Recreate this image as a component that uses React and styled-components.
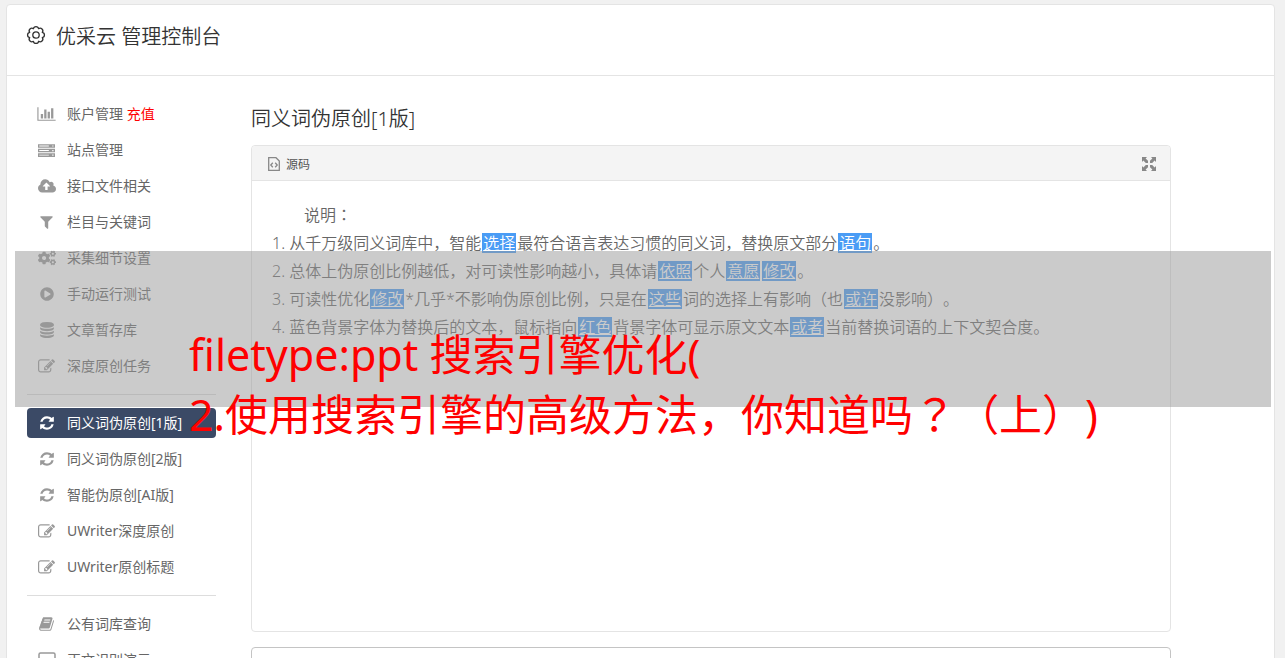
import React from 'react'
import styled, { createGlobalStyle, css } from 'styled-components'
import { FaCogs, FaPlayCircle } from 'react-icons/fa'

const ChartIcon = () => (
    <svg viewBox="0 0 2048 1792" width="19" height="16" fill="currentColor" aria-hidden="true">
        <path d="M640 896v512h-256v-512h256zm384-512v1024h-256v-1024h256zm1024 1152v128h-2048v-1536h128v1408h1920zm-640-896v768h-256v-768h256zm384-384v1152h-256v-1152h256z" />
    </svg>
)

const ServerIcon = () => (
    <svg viewBox="0 0 16 14" width="17" height="15" fill="currentColor" aria-hidden="true">
        <path fillRule="evenodd" d="M0 1h16v3.4H0zM1.2 2.3v.9h9v-.9zM13.4 2.2v1.1h1.2V2.2zM0 5.3h16v3.4H0zM1.2 6.6v.9h9v-.9zM13.4 6.5v1.1h1.2V6.5zM0 9.6h16V13H0zM1.2 10.9v.9h9v-.9zM13.4 10.8v1.1h1.2v-1.1z" />
    </svg>
)

const CloudIcon = () => (
    <svg viewBox="0 0 1920 1792" width="18" height="17" fill="currentColor" aria-hidden="true">
        <path d="M1280 864q0-14-9-23l-352-352q-9-9-23-9t-23 9l-351 351q-10 12-10 24 0 14 9 23t23 9h224v352q0 13 9.500 22.500t22.500 9.500h192q13 0 22.500-9.500t9.500-22.500v-352h224q13 0 22.500-9.500t9.500-22.500zm640 288q0 159-112.500 271.500t-271.500 112.500h-1088q-185 0-316.500-131.500t-131.500-316.500q0-130 70-240t188-165q-2-30-2-43 0-212 150-362t362-150q156 0 285.500 87t188.500 231q71-62 166-62 106 0 181 75t75 181q0 76-41 138 130 31 213.500 135.500t83.500 238.500z" />
    </svg>
)

const FilterIcon = () => (
    <svg viewBox="0 0 1408 1792" width="13" height="16" fill="currentColor" aria-hidden="true">
        <path d="M1403 295q17 41-14 70l-493 493v742q0 42-39 59-13 5-25 5-27 0-45-19l-256-256q-19-19-19-45v-486l-493-493q-31-29-14-70 17-39 59-39h1280q42 0 59 39z" />
    </svg>
)

const DatabaseIcon = () => (
    <svg viewBox="0 0 1536 1792" width="14" height="16" fill="currentColor" aria-hidden="true">
        <path d="M768 768q237 0 443-43t325-127v170q0 69-103 128t-280 93.500-385 34.500-385-34.500-280-93.500-103-128v-170q119 84 325 127t443 43zm0 768q237 0 443-43t325-127v170q0 69-103 128t-280 93.500-385 34.500-385-34.500-280-93.500-103-128v-170q119 84 325 127t443 43zm0-384q237 0 443-43t325-127v170q0 69-103 128t-280 93.500-385 34.500-385-34.500-280-93.500-103-128v-170q119 84 325 127t443 43zm0-1152q208 0 385 34.500t280 93.500 103 128v128q0 69-103 128t-280 93.500-385 34.500-385-34.500-280-93.500-103-128v-128q0-69 103-128t280-93.500 385-34.500z" />
    </svg>
)

const EditIcon = () => (
    <svg viewBox="0 0 1792 1792" width="17" height="17" fill="currentColor" aria-hidden="true">
        <path d="M888 1184l116-116-152-152-116 116v56h96v96h56zm440-720q-16-16-33 1l-350 350q-17 17-1 33t33-1l350-350q17-17 1-33zm80 594v190q0 119-84.500 203.500t-203.500 84.500h-832q-119 0-203.500-84.500t-84.500-203.500v-832q0-119 84.500-203.500t203.500-84.500h832q63 0 117 25 15 7 18 23 3 17-9 29l-49 49q-14 14-32 8-23-6-45-6h-832q-66 0-113 47t-47 113v832q0 66 47 113t113 47h832q66 0 113-47t47-113v-126q0-13 9-22l64-64q15-15 35-7t20 29zm-96-738l288 288-672 672h-288v-288zm444 132l-92 92-288-288 92-92q28-28 68-28t68 28l152 152q28 28 28 68t-28 68z" />
    </svg>
)

const RefreshIcon = () => (
    <svg viewBox="0 0 1536 1792" width="14" height="16" fill="currentColor" aria-hidden="true">
        <path d="M1511 1056q0 5-1 7-64 268-268 434.500t-478 166.500q-146 0-282.500-55t-243.500-157l-129 129q-19 19-45 19t-45-19-19-45v-448q0-26 19-45t45-19h448q26 0 45 19t19 45-19 45l-137 137q71 66 161 102t187 36q134 0 250-65t186-179q11-17 53-117 8-23 30-23h192q13 0 22.500 9.500t9.500 22.500zm25-800v448q0 26-19 45t-45 19h-448q-26 0-45-19t-19-45 19-45l138-138q-148-137-349-137-134 0-250 65t-186 179q-11 17-53 117-8 23-30 23h-199q-13 0-22.500-9.500t-9.500-22.500v-7q65-268 270-434.500t480-166.500q146 0 284 55.500t245 156.500l130-129q19-19 45-19t45 19 19 45z" />
    </svg>
)

const BookIcon = () => (
    <svg viewBox="0 0 1664 1792" width="15" height="16" fill="currentColor" aria-hidden="true">
        <path d="M1639 478q40 57 18 129l-275 906q-19 64-76.500 107.500t-122.500 43.500h-923q-77 0-148.500-53.500t-99.500-131.500q-24-67-2-127 0-4 3-27t4-37q1-8-3-21.500t-3-19.500q2-11 8-21t16.500-23.500 16.500-23.500q23-38 45-91.500t30-91.500q3-10 .5-30t-.5-28q3-11 17-28t17-23q21-36 42-92t25-90q1-9-2.500-32t.5-28q4-13 22-30.500t22-22.500q19-26 42.500-84.500t27.500-96.500q1-8-3-25.500t-2-26.500q2-8 9-18t18-23 17-21q8-12 16.500-30.500t15-35 16-36 19.500-32 26.500-23.500 36-11.500 47.500 5.500l-1 3q38-9 51-9h761q74 0 114 56t18 130l-274 906q-36 119-71.500 153.500t-128.500 34.500h-869q-27 0-38 15-11 16-1 43 24 70 144 70h923q29 0 56-15.500t35-41.500l300-987q7-22 5-57 38 15 59 43zm-1064 2q-4 13 2 22.500t20 9.500h608q13 0 25.500-9.500t16.500-22.500l21-64q4-13-2-22.500t-20-9.500h-608q-13 0-25.500 9.500t-16.500 22.500zm-83 256q-4 13 2 22.500t20 9.500h608q13 0 25.500-9.500t16.500-22.500l21-64q4-13-2-22.500t-20-9.500h-608q-13 0-25.500 9.500t-16.500 22.500z" />
    </svg>
)

const LaptopIcon = () => (
    <svg viewBox="0 0 18 16" width="18" height="16" fill="none" stroke="currentColor" aria-hidden="true">
        <rect x="1" y="1" width="16" height="10" rx="1.500" strokeWidth="1.500" />
        <path d="M0 13.500h18" strokeWidth="2" />
    </svg>
)

const GearIcon = () => (
    <svg viewBox="-1 -1 20 20" width="20" height="20" fill="none" stroke="currentColor" strokeWidth="1.300" aria-hidden="true">
        <path strokeLinejoin="round" d="M6.400 2.700a2.650 2.650 0 0 1 5.200 0a2.650 2.650 0 0 1 3.700 3.700a2.650 2.650 0 0 1 0 5.200a2.650 2.650 0 0 1-3.700 3.700a2.650 2.650 0 0 1-5.200 0a2.650 2.650 0 0 1-3.700-3.700a2.650 2.650 0 0 1 0-5.200a2.650 2.650 0 0 1 3.700-3.700z" />
        <circle cx="9" cy="9" r="3.200" />
    </svg>
)

const SourceIcon = () => (
    <svg viewBox="0 0 12 14" width="12" height="14" fill="none" stroke="currentColor" aria-hidden="true">
        <path d="M.7.700h7.300l3.300 3.300v9.300H.7z" strokeWidth="1.300" />
        <path d="M4.800 5.800L2.800 8l2 2.200M7.200 5.800l2 2.200-2 2.200" strokeWidth="1.300" />
    </svg>
)

const ExpandIcon = () => (
    <svg viewBox="0 0 14 14" width="14" height="14" fill="currentColor" aria-hidden="true">
        <path d="M0 0h5L3.600 1.400 6 3.800v2.200H3.800L1.400 3.600 0 5zM14 0v5l-1.400-1.400L10.200 6H8V3.800l2.400-2.400L9 0zM0 14V9l1.400 1.400L3.800 8H6v2.200l-2.400 2.400L5 14zM14 14H9l1.400-1.400L8 10.200V8h2.200l2.400 2.400L14 9z" />
    </svg>
)

const groups = [
    [
        { text: '账户管理', extra: '充值', icon: <ChartIcon /> },
        { text: '站点管理', icon: <ServerIcon /> },
        { text: '接口文件相关', icon: <CloudIcon /> },
        { text: '栏目与关键词', icon: <FilterIcon /> },
        { text: '采集细节设置', icon: <FaCogs size={18} /> },
        { text: '手动运行测试', icon: <FaPlayCircle size={14} /> },
        { text: '文章暂存库', icon: <DatabaseIcon /> },
        { text: '深度原创任务', icon: <EditIcon /> },
    ],
    [
        { text: '同义词伪原创[1版]', icon: <RefreshIcon />, active: true },
        { text: '同义词伪原创[2版]', icon: <RefreshIcon /> },
        { text: '智能伪原创[AI版]', icon: <RefreshIcon /> },
        { text: 'UWriter深度原创', icon: <EditIcon /> },
        { text: 'UWriter原创标题', icon: <EditIcon /> },
    ],
    [
        { text: '公有词库查询', icon: <BookIcon /> },
        { text: '正文识别演示', icon: <LaptopIcon /> },
    ],
]

// words in braces are the replaced ones
const rows = [
    '1. 从千万级同义词库中，智能{选择}最符合语言表达习惯的同义词，替换原文部分{语句}。',
    '2. 总体上伪原创比例越低，对可读性影响越小，具体请{依照}个人{意愿}{修改}。',
    '3. 可读性优化{修改}*几乎*不影响伪原创比例，只是在{这些}词的选择上有影响（也{或许}没影响）。',
    '4. 蓝色背景字体为替换后的文本，鼠标指向{红色}背景字体可显示原文文本{或者}当前替换词语的上下文契合度。',
]

// the colon and the question mark sit in the middle of their square
const format = (text) => text.split(/(\{.+?\}|[：？])/).map((part, i) => {
    if (part.startsWith('{')) return <Word key={i}>{part.slice(1, -1)}</Word>
    if (/^[：？]$/.test(part)) return <Mark key={i}>{part}</Mark>
    return part
})

const App = () => {
    return (
        <Page>
            <GlobalStyle />
            <Panel>
                <Header>
                    <GearIcon />
                    <Brand>优采云 管理控制台</Brand>
                </Header>
                <Body>
                    <Sidebar>
                        {groups.map((items, i) => (
                            <React.Fragment key={i}>
                                {i > 0 && <Line />}
                                {items.map((item) => (
                                    <Item key={item.text} href="#" $active={item.active}>
                                        <IconBox $active={item.active}>{item.icon}</IconBox>
                                        <Label>{item.text}{item.extra && <Red> {item.extra}</Red>}</Label>
                                    </Item>
                                ))}
                            </React.Fragment>
                        ))}
                    </Sidebar>
                    <Main>
                        <Title>同义词伪原创[1版]</Title>
                        <Editor>
                            <Toolbar>
                                <ToolButton type="button"><SourceIcon />源码</ToolButton>
                                <ToolButton type="button" aria-label="全屏"><ExpandIcon /></ToolButton>
                            </Toolbar>
                            <Content>
                                <Intro>{format('说明：')}</Intro>
                                {rows.map((row) => <Row key={row}>{format(row)}</Row>)}
                            </Content>
                        </Editor>
                        <TextBox aria-label="原文" />
                    </Main>
                </Body>
            </Panel>
            <Overlay>
                <Caption>
                    filetype:ppt 搜索引擎优化(<br />
                    {format('2.使用搜索引擎的高级方法，你知道吗？（上）)')}
                </Caption>
            </Overlay>
        </Page>
    )
}

export default App

const GlobalStyle = createGlobalStyle`
    * {
        box-sizing: border-box;
    }
    body {
        margin: 0;
        background: #f1f1f1;
        color: #666;
        font-family: "Noto Sans", "Noto Sans CJK SC", sans-serif;
        text-spacing-trim: space-all;
    }
    svg {
        display: block;
        flex: none;
    }
`
const Page = styled.div`
    position: relative;
    height: 100vh;
    padding: 4px 10px 0 6px;
    overflow: hidden;
`
const Panel = styled.div`
    background: #fff;
    border: 1px solid #e4e4e4;
    border-radius: 4px;
`
const Header = styled.header`
    display: flex;
    align-items: center;
    gap: 10px;
    height: 71px;
    padding: 0 19px 10px;
    border-bottom: 1px solid #e4e4e4;
    color: #333;
`
const Brand = styled.h1`
    margin: 0;
    padding-top: 3px;
    font-size: 20px;
    font-weight: 350;
    line-height: 28px;
`
const Body = styled.div`
    display: flex;
    gap: 35px;
    padding: 23px 20px 0;
`
const Sidebar = styled.nav`
    display: flex;
    flex-direction: column;
    flex: none;
    gap: 6px;
    width: 189px;
`
const Line = styled.hr`
    width: 100%;
    height: 1px;
    margin: 7px 0;
    border: 0;
    background: #ddd;
`
const Item = styled.a`
    display: flex;
    align-items: center;
    height: 30px;
    padding-left: 10px;
    border-radius: 4px;
    color: #666;
    font-size: 14px;
    text-decoration: none;
    ${(p) => p.$active && css`
        background: #3b4a66;
        color: #fff;
    `}
`
const IconBox = styled.span`
    display: flex;
    justify-content: center;
    width: 19px;
    margin-right: 11px;
    color: ${(p) => (p.$active ? '#fff' : '#999')};
`
const Label = styled.span`
    padding-bottom: 2px;
`
const Red = styled.span`
    color: #f00;
`
const Main = styled.main`
    flex: 1;
    max-width: 920px;
`
const Title = styled.h2`
    margin: 0;
    padding: 6px 0 12px;
    color: #333;
    font-size: 20px;
    font-weight: 350;
    line-height: 28px;
`
const Editor = styled.div`
    border: 1px solid #e4e4e4;
    border-radius: 4px;
`
const Toolbar = styled.div`
    display: flex;
    align-items: center;
    justify-content: space-between;
    height: 35px;
    padding: 2px 14px 0 16px;
    border-bottom: 1px solid #e4e4e4;
    border-radius: 4px 4px 0 0;
    background: #f4f4f4;
`
const ToolButton = styled.button`
    display: flex;
    align-items: center;
    gap: 6px;
    padding: 0;
    border: 0;
    background: none;
    color: #555;
    font-family: inherit;
    font-size: 12px;
    svg {
        color: #888;
    }
`
const Content = styled.div`
    min-height: 450px;
    padding: 20px;
    font-size: 16px;
    font-weight: 350;
    line-height: 28px;
`
const Intro = styled.p`
    margin: 0;
    text-indent: 2em;
`
const Row = styled.p`
    margin: 0;
`
const Word = styled.ins`
    display: inline-block;
    margin: 0 1px;
    padding: 0 1px;
    background: #4a9cf5;
    color: #fff;
    line-height: 20px;
    text-decoration: underline;
`
const Mark = styled.span`
    font-family: "Noto Sans CJK TC", sans-serif;
    line-height: 1;
`
const TextBox = styled.textarea`
    display: block;
    width: 100%;
    height: 120px;
    margin-top: 15px;
    border: 1px solid #c4c4c4;
    border-radius: 4px;
    resize: none;
`
const Overlay = styled.div`
    position: absolute;
    top: 251px;
    left: 15px;
    right: 14px;
    height: 156px;
    padding: 74px 0 0 174px;
    background: rgba(151, 151, 151, 0.5);
`
const Caption = styled.p`
    margin: 0;
    color: #f00;
    font-size: 43px;
    line-height: 60px;
    white-space: nowrap;
`
